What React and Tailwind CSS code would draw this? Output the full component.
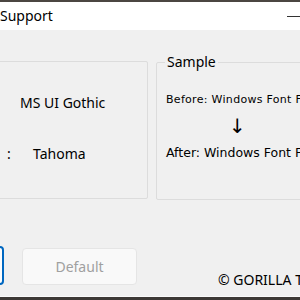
export default function App() {
  return (
    <div className="w-[300px] h-[300px] overflow-hidden bg-[#f0f0f0] flex flex-col text-black" style={{ fontFamily: '"Noto Sans", "Open Sans", sans-serif' }}>
      {/* desktop strip */}
      <div className="h-[2px] shrink-0 bg-[#4b4641]" />

      {/* title bar */}
      <div className="h-[28px] shrink-0 bg-white flex items-center justify-between">
        <span className="text-[14px] leading-none whitespace-nowrap">Support</span>
        <div className="w-[13px] h-[1px] bg-[#333]" />
      </div>

      {/* body */}
      <div className="flex-1 flex flex-col">
        <div className="flex gap-[8px] mt-[24px] h-[146px]">
          <fieldset className="w-[200px] -ml-[52px] h-[138px] mt-[7px] border border-[#dcdcdc] rounded-[2px]">
            <div className="flex flex-col pl-[52px] pt-[31px] text-[14px] leading-none">
              <div className="pl-[19px] h-[20px] flex items-center">MS UI Gothic</div>
              <div className="flex items-center h-[20px] mt-[31px] pl-[6px]">
                <span className="w-[26px]">:</span>
                <span>Tahoma</span>
              </div>
            </div>
          </fieldset>

          <fieldset className="flex-1 -mr-[40px] border border-[#dcdcdc] rounded-[2px]">
            <legend className="ml-[8px] px-[2px] text-[14px] leading-[16px]">Sample</legend>
            <div className="flex flex-col pl-[9px] pt-[24px] whitespace-nowrap">
              <div className="text-[11px] leading-[12px] tracking-[0.3px]" style={{ fontFamily: '"DejaVu Sans", sans-serif' }}>
                Before: Windows Font Fixer
              </div>
              <div className="text-[20px] leading-[20px] pl-[63px] mt-[10px]" style={{ fontFamily: '"DejaVu Sans", sans-serif' }}>↓</div>
              <div className="text-[12.5px] leading-[16px] mt-[9px]" style={{ fontFamily: '"DejaVu Sans", sans-serif' }}>
                After: Windows Font Fixer
              </div>
            </div>
          </fieldset>
        </div>

        {/* buttons */}
        <div className="flex mt-[48px] items-start">
          <div className="w-[100px] -ml-[96px] h-[39px] mt-[-2px] rounded-[4px] border-2 border-[#0067c0] bg-[#fdfdfd]" />
          <button className="ml-[18px] w-[115px] h-[37px] rounded-[4px] border border-[#e5e5e5] bg-[#f9f9f9] text-[14px] text-[#a0a0a0]">
            Default
          </button>
        </div>

        <div className="flex-1 flex items-start">
          <span className="ml-[218px] -mt-[13px] text-[14px] leading-[16px] whitespace-nowrap">© GORILLA TECHNOLOGY</span>
        </div>
      </div>

      {/* bottom strip */}
      <div className="h-[1px] shrink-0 bg-[#fafafa]" />
      <div className="h-[3px] shrink-0 bg-[#3c3835]" />
    </div>
  );
}
